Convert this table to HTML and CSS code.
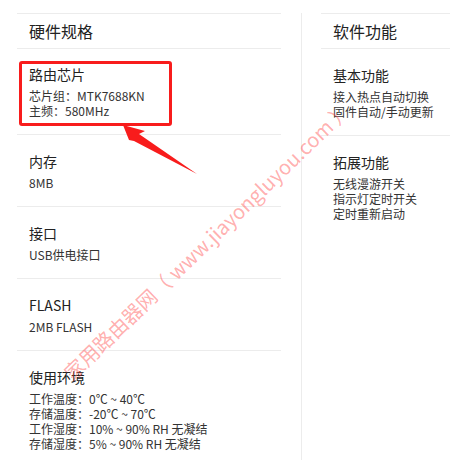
FILE: index.html
```html
<!DOCTYPE html>
<html lang="zh-CN">
<head>
    <meta charset="UTF-8">
    <title>规格参数</title>
    <link rel="stylesheet" href="styles.css">
</head>
<body>
    <div class="page">
        <div class="col-wrap">
            <div class="col">
                <div class="col-title">硬件规格</div>
                <div class="item item-first">
                    <div class="item-name">路由芯片</div>
                    <div class="item-text">芯片组：MTK7688KN<br>主频：580MHz</div>
                    <div class="highlight"></div>
                </div>
                <div class="item">
                    <div class="item-name">内存</div>
                    <div class="item-text">8MB</div>
                </div>
                <div class="item">
                    <div class="item-name">接口</div>
                    <div class="item-text">USB供电接口</div>
                </div>
                <div class="item">
                    <div class="item-name">FLASH</div>
                    <div class="item-text">2MB FLASH</div>
                </div>
                <div class="item item-last">
                    <div class="item-name">使用环境</div>
                    <div class="item-text">工作温度：0℃ ~ 40℃<br>存储温度：-20℃ ~ 70℃<br>工作湿度：10% ~ 90% RH 无凝结<br>存储湿度：5% ~ 90% RH 无凝结</div>
                </div>
            </div>
        </div>
        <div class="col col-right">
            <div class="col-title">软件功能</div>
            <div class="item">
                <div class="item-name">基本功能</div>
                <div class="item-text">接入热点自动切换<br>固件自动/手动更新</div>
            </div>
            <div class="item item-last">
                <div class="item-name">拓展功能</div>
                <div class="item-text">无线漫游开关<br>指示灯定时开关<br>定时重新启动</div>
            </div>
        </div>

        <!-- Markierung: Pfeil auf den Chip -->
        <svg class="arrow" width="80" height="60" viewBox="0 0 80 60">
            <polygon points="3,5 25,11 19,14 77,54 14,21 9,20" fill="#f81c1c"/>
        </svg>

        <div class="watermark">家用路由器网（ www.jiayongluyou.com ）</div>
    </div>
</body>
</html>
```

FILE: styles.css
```css
body {
    margin: 0;
    padding: 0;
    background: #fff;
    color: #333;
    font-family: "Noto Sans CJK SC", "Noto Sans", sans-serif;
    overflow: hidden;
}

.page {
    position: relative;
    display: flex;
    align-items: flex-start;
    padding: 13px 0 0 17px;
    height: 447px;
    overflow: hidden;
}

.col-wrap {
    padding-right: 20px;
    border-right: 1px solid #ececec;
    height: 100%;
}

.col {
    width: 264px;
    border-top: 1px solid #ececec;
}

.col-right {
    margin-left: 19px;
    width: 200px;
    flex-shrink: 0;
}

.col-title {
    height: 34px;
    line-height: 34px;
    padding-left: 12px;
    font-size: 16px;
    color: #222;
    border-bottom: 1px solid #ececec;
}

.item {
    position: relative;
    padding: 18px 12px 16px;
    border-bottom: 1px solid #ececec;
}

.item-first {
    padding-top: 17px;
}

.item-last {
    border-bottom: none;
}

.item-name {
    font-size: 14px;
    line-height: 16px;
    color: #222;
    margin-bottom: 6px;
}

.item-text {
    font-size: 12px;
    line-height: 15px;
    color: #333;
}

.highlight {
    position: absolute;
    left: 2px;
    top: 12px;
    width: 147px;
    height: 59px;
    border: 3px solid #f81c1c;
    border-radius: 3px;
}

.arrow {
    position: absolute;
    left: 120px;
    top: 120px;
}

.watermark {
    position: absolute;
    left: 7px;
    top: 229px;
    width: 400px;
    text-align: center;
    font-size: 20px;
    line-height: 24px;
    color: rgba(255, 50, 50, 0.4);
    white-space: nowrap;
    transform: rotate(-44deg);
    pointer-events: none;
}
```
